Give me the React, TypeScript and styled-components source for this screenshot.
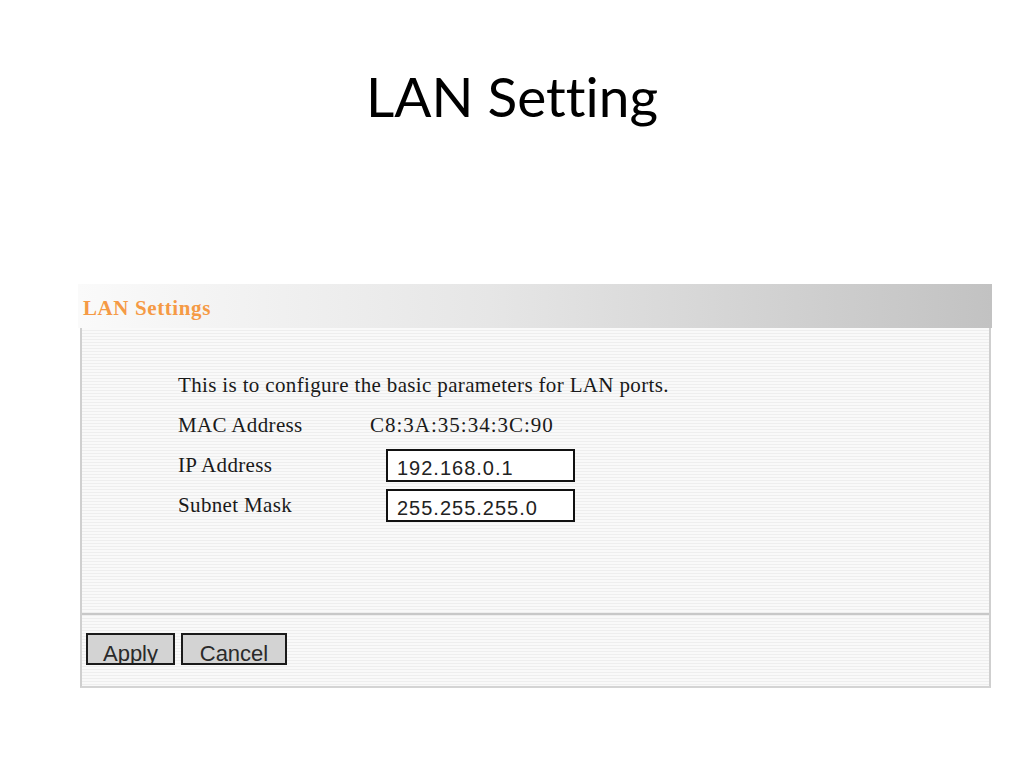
import styled, { createGlobalStyle } from 'styled-components';

const GlobalStyle = createGlobalStyle`
  html, body {
    margin: 0;
    padding: 0;
    background: #ffffff;
  }
  body {
    width: 1024px;
    height: 768px;
    overflow: hidden;
  }
`;

const Slide = styled.div`
  width: 1024px;
  height: 768px;
  display: flex;
  flex-direction: column;
  align-items: flex-start;
`;

const Title = styled.h1`
  align-self: stretch;
  margin: 56px 0 0;
  height: 80px;
  text-align: center;
  font-family: 'Lato', 'Open Sans', sans-serif;
  font-weight: 400;
  font-size: 55px;
  line-height: 80px;
  font-variant-ligatures: none;
  color: #000000;
`;

const Panel = styled.div`
  margin: 148px 0 0 78px;
  width: 917px;
  display: flex;
  flex-direction: column;
  font-family: 'Liberation Serif', 'Times New Roman', serif;
`;

const stripes = `
  background: repeating-linear-gradient(
    to bottom,
    #f9f9f9 0px,
    #f9f9f9 2px,
    #eeeeee 2px,
    #eeeeee 3px
  );
`;

const Header = styled.div`
  height: 44px;
  box-sizing: border-box;
  display: flex;
  align-items: center;
  padding: 5px 0 0 5px;
  margin-right: 3px;
  background: linear-gradient(to right, #fafafa 0%, #e6e6e6 45%, #c2c2c2 100%);
  color: #f59a45;
  font-weight: bold;
  font-size: 21px;
  letter-spacing: 0.6px;
`;

const Body = styled.div`
  ${stripes}
  margin: 0 4px 0 2px;
  border-left: 2px solid #cfcfcf;
  border-right: 2px solid #cfcfcf;
  border-bottom: 2px solid #d4d4d4;
  display: flex;
  flex-direction: column;
`;

const Content = styled.div`
  height: 287px;
  box-sizing: border-box;
  padding: 37px 0 0 96px;
  border-bottom: 2px solid #c8c8c8;
  display: flex;
  flex-direction: column;
`;

const Row = styled.div`
  height: 40px;
  display: flex;
  align-items: center;
  font-size: 21px;
  letter-spacing: 0.35px;
  color: #1a1a1a;
`;

const Label = styled.span`
  width: 192px;
  flex-shrink: 0;
`;

const Value = styled.span`
  letter-spacing: 1px;
`;

const Field = styled.div`
  margin-left: 16px;
  width: 189px;
  height: 33px;
  box-sizing: border-box;
  border: 2px solid #111111;
  background: #ffffff;
  padding: 4px 0 0 9px;
  font-family: 'Liberation Sans', Arial, sans-serif;
  font-size: 20px;
  letter-spacing: 1px;
  line-height: 26px;
  color: #222222;
  overflow: hidden;
`;

const Footer = styled.div`
  height: 71px;
  box-sizing: border-box;
  padding: 18px 0 0 4px;
  display: flex;
  gap: 6px;
  align-items: flex-start;
`;

const Button = styled.div<{ $w: number }>`
  width: ${(p) => p.$w}px;
  height: 32px;
  box-sizing: border-box;
  border: 2px solid #1a1a1a;
  background: #d3d3d3;
  text-align: center;
  padding-top: 6px;
  font-family: 'Liberation Sans', Arial, sans-serif;
  font-size: 22px;
  line-height: 26px;
  color: #2a2a2a;
  overflow: hidden;
`;

export default function App() {
  return (
    <>
      <GlobalStyle />
      <Slide>
        <Title>LAN Setting</Title>
        <Panel>
          <Header>LAN Settings</Header>
          <Body>
            <Content>
              <Row>This is to configure the basic parameters for LAN ports.</Row>
              <Row>
                <Label>MAC Address</Label>
                <Value>C8:3A:35:34:3C:90</Value>
              </Row>
              <Row>
                <Label>IP Address</Label>
                <Field>192.168.0.1</Field>
              </Row>
              <Row>
                <Label>Subnet Mask</Label>
                <Field>255.255.255.0</Field>
              </Row>
            </Content>
            <Footer>
              <Button $w={89}>Apply</Button>
              <Button $w={106}>Cancel</Button>
            </Footer>
          </Body>
        </Panel>
      </Slide>
    </>
  );
}
